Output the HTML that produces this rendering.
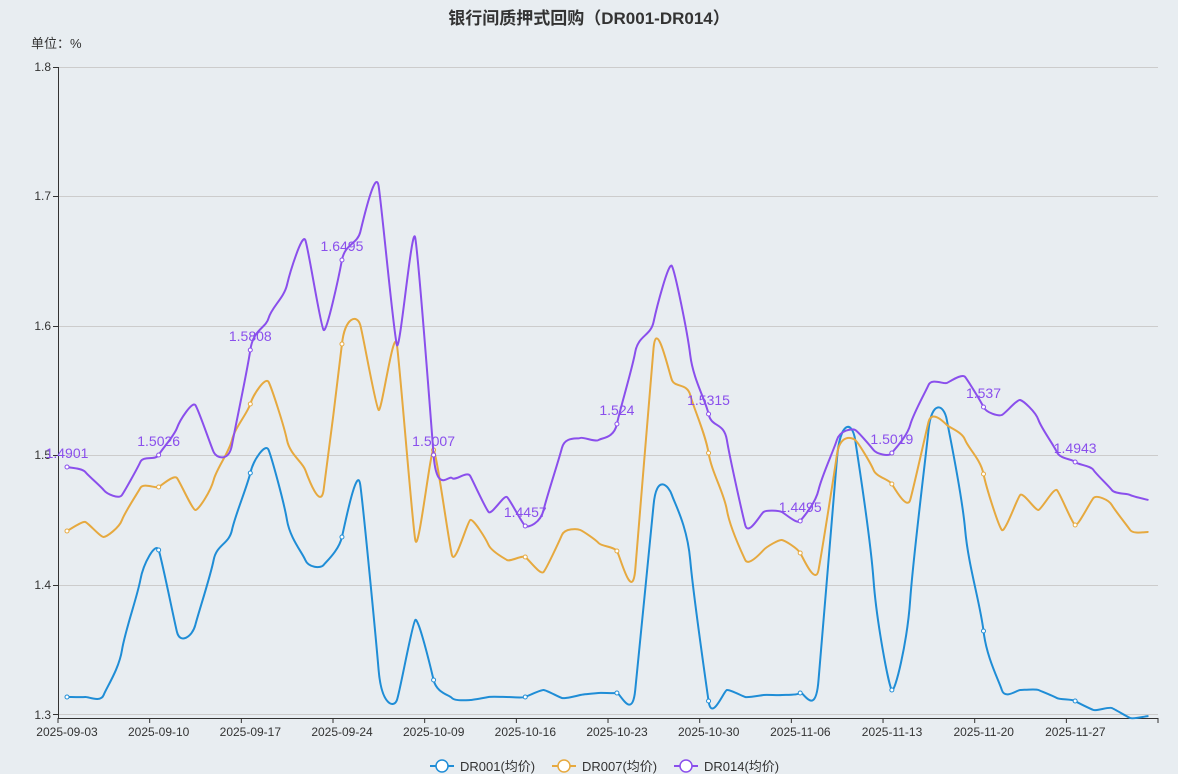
<!DOCTYPE html>
<html><head><meta charset="utf-8"><style>
html,body{margin:0;padding:0;background:#e8edf1;}
svg{display:block;font-family:"Liberation Sans","Noto Sans CJK SC",sans-serif;}
</style></head><body>
<svg id="c" width="1178" height="774" viewBox="0 0 1178 774">
<rect width="1178" height="774" fill="#e8edf1"/>
<text x="589" y="24" text-anchor="middle" font-size="17" font-weight="bold" fill="#333">银行间质押式回购（DR001-DR014）</text>
<text x="31" y="48" font-size="13" fill="#333">单位：%</text>
<g stroke="#cccccc" stroke-width="1">
<line x1="58" y1="67.5" x2="1158" y2="67.5"/>
<line x1="58" y1="196.5" x2="1158" y2="196.5"/>
<line x1="58" y1="326.5" x2="1158" y2="326.5"/>
<line x1="58" y1="455.5" x2="1158" y2="455.5"/>
<line x1="58" y1="585.5" x2="1158" y2="585.5"/>
<line x1="58" y1="714.5" x2="1158" y2="714.5"/>
</g>
<g font-size="12" fill="#333" text-anchor="end">
<text x="51" y="71">1.8</text><text x="51" y="200">1.7</text><text x="51" y="330">1.6</text>
<text x="51" y="459">1.5</text><text x="51" y="589">1.4</text><text x="51" y="719">1.3</text>
</g>
<g stroke="#333" stroke-width="1">
<line x1="58.5" y1="67" x2="58.5" y2="719"/>
<line x1="58" y1="718.5" x2="1158" y2="718.5"/>
<line x1="53" y1="67.5" x2="58" y2="67.5"/><line x1="53" y1="196.5" x2="58" y2="196.5"/>
<line x1="53" y1="326.5" x2="58" y2="326.5"/><line x1="53" y1="455.5" x2="58" y2="455.5"/>
<line x1="53" y1="585.5" x2="58" y2="585.5"/><line x1="53" y1="714.5" x2="58" y2="714.5"/>
</g>
<g id="xt" font-size="12" fill="#333" text-anchor="middle"></g>
<g id="lines"></g>
<g font-size="13" fill="#333">
<line x1="430" y1="766" x2="454" y2="766" stroke="#1f8dd6" stroke-width="2"/><circle cx="442" cy="766" r="6" fill="#fff" stroke="#1f8dd6" stroke-width="1.5"/>
<text x="460" y="771">DR001(均价)</text>
<line x1="552" y1="766" x2="576" y2="766" stroke="#e6a93f" stroke-width="2"/><circle cx="564" cy="766" r="6" fill="#fff" stroke="#e6a93f" stroke-width="1.5"/>
<text x="582" y="771">DR007(均价)</text>
<line x1="674" y1="766" x2="698" y2="766" stroke="#8a4fec" stroke-width="2"/><circle cx="686" cy="766" r="6" fill="#fff" stroke="#8a4fec" stroke-width="1.5"/>
<text x="704" y="771">DR014(均价)</text>
</g>
</svg>
<script>
var NS="http://www.w3.org/2000/svg";
var labels=["2025-09-03","2025-09-10","2025-09-17","2025-09-24","2025-10-09","2025-10-16","2025-10-23","2025-10-30","2025-11-06","2025-11-13","2025-11-20","2025-11-27"];
var xt=document.getElementById("xt");
var h="";
for(var i=0;i<12;i++){var tx=58+i*91.67;h+='<line x1="'+tx+'" y1="718" x2="'+tx+'" y2="723" stroke="#333"/><text x="'+(tx+9)+'" y="736">'+labels[i]+'</text>';}
h+='<line x1="1158" y1="718" x2="1158" y2="723" stroke="#333"/>';
xt.innerHTML=h;
var b=[697,697,695,650,580, 550,632,625,560,530, 473,450,520,560,565, 537,485,670,700,620, 680,698,700,697,697, 697,690,698,695,693, 693,690,505,495,560, 701,690,697,695,695, 693,680,460,440,580, 690,600,430,420,530, 631,690,690,690,698, 701,710,708,718,716];
var o=[531,522,537,520,488, 487,478,510,480,440, 404,382,440,470,490, 344,325,410,345,540, 450,555,520,545,560, 557,572,535,530,543, 551,570,348,380,395, 453,510,560,550,540, 553,570,455,440,470, 484,500,422,425,440, 474,530,495,510,490, 525,498,505,530,532];
var p=[467,472,490,495,462, 455,428,405,452,445, 350,318,285,240,330, 260,232,186,345,238, 455,478,476,512,497, 526,510,448,438,440, 424,352,322,266,355, 414,440,525,512,512, 521,490,440,430,450, 453,425,385,383,377, 407,415,400,420,452, 462,470,490,495,500];
function X(i){return 67+i*18.33;}
function path(a){var d="M"+X(0)+","+a[0];for(var i=0;i<a.length-1;i++){var p0=a[Math.max(0,i-1)],p1=a[i],p2=a[i+1],p3=a[Math.min(a.length-1,i+2)];var x1=X(i),x2=X(i+1),dx=18.33/6;d+=" C"+(x1+dx)+","+(p1+(p2-p0)/6)+" "+(x2-dx)+","+(p2-(p3-p1)/6)+" "+x2+","+p2;}return d;}
var g=document.getElementById("lines"),s="";
var sets=[[b,"#1f8dd6"],[o,"#e6a93f"],[p,"#8a4fec"]];
sets.forEach(function(t){s+='<path d="'+path(t[0])+'" fill="none" stroke="'+t[1]+'" stroke-width="2"/>';for(var i=0;i<60;i+=5)s+='<circle cx="'+X(i)+'" cy="'+t[0][i]+'" r="2" fill="#fff" stroke="'+t[1]+'"/>';});
var pl=["1.4901","1.5026","1.5808","1.6495","1.5007","1.4457","1.524","1.5315","1.4495","1.5019","1.537","1.4943"];
for(var k=0;k<12;k++){s+='<text x="'+X(k*5)+'" y="'+(p[k*5]-9)+'" text-anchor="middle" font-size="14" fill="#8a4fec">'+pl[k]+'</text>';}
g.innerHTML=s;
</script>
</body></html>
